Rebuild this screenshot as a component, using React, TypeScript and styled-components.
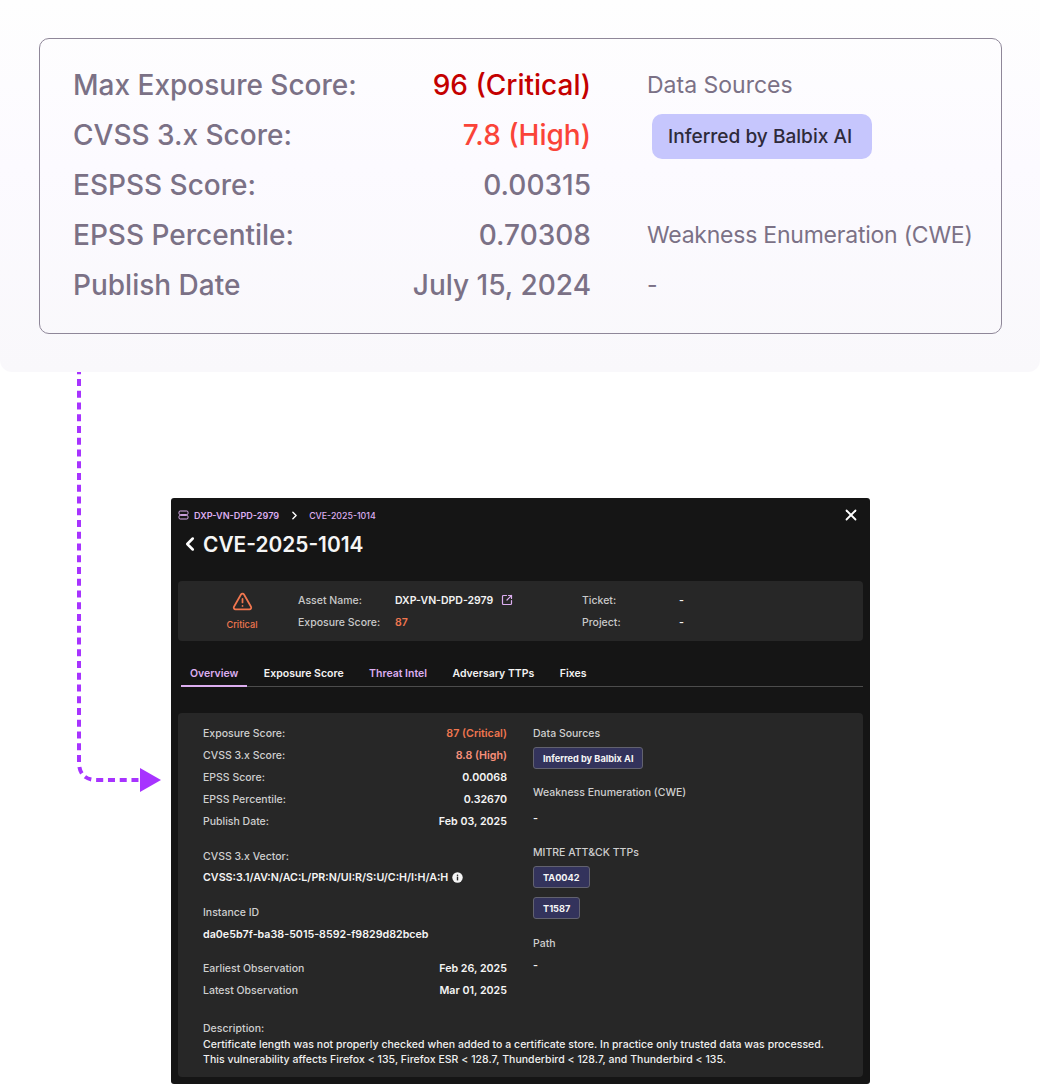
import React from 'react';
import styled, { createGlobalStyle } from 'styled-components';
import { X, ChevronRight, ChevronLeft, TriangleAlert, SquareArrowOutUpRight } from 'lucide-react';

const GlobalStyle = createGlobalStyle`
  html, body {
    margin: 0;
    background: #fff;
    font-family: 'Inter', 'Liberation Sans', sans-serif;
  }
  * { box-sizing: border-box; }
`;

const Page = styled.div`
  width: 1040px;
  height: 1084px;
  overflow: hidden;
`;

const ScorePanel = styled.section`
  height: 372px;
  padding: 38px 38px 0 39px;
  border-radius: 0 0 12px 12px;
  background: linear-gradient(180deg, #fefefe 0%, #fcfaff 45%, #f9f8fb 100%);
`;

const ScoreCard = styled.div`
  height: 296px;
  padding: 21px 28px 0 33px;
  border: 1px solid #8f8799;
  border-radius: 10px;
  display: grid;
  grid-template-columns: 518px 1fr;
  column-gap: 56px;
`;

const ScoreRows = styled.div`
  display: grid;
  grid-auto-rows: 50px;
`;

const ScoreRow = styled.div`
  display: flex;
  justify-content: space-between;
  align-items: center;
  font-size: 28px;
  font-weight: 500;
  color: #7b7186;
`;

const ScoreValue = styled.span<{ $tone?: string }>`
  color: ${({ $tone }) => $tone || '#7b7186'};
`;

const SourceCol = styled.div`
  display: grid;
  grid-auto-rows: 50px;
  align-items: center;
  justify-items: start;
  font-size: 23px;
  color: #7b7186;
  white-space: nowrap;
`;

const TightLabel = styled.span`
  letter-spacing: -0.23px;
`;

const SourceChip = styled.div`
  margin: 2px 0 0 5px;
  height: 45px;
  padding: 0 20px 0 16px;
  display: flex;
  align-items: center;
  border-radius: 10px;
  background: #c6c6fd;
  color: #2e2a3a;
  font-size: 19.1px;
  font-weight: 500;
`;

const LowerSection = styled.section`
  display: flex;
  align-items: flex-start;
`;

const Connector = styled.svg`
  display: block;
  flex: none;
`;

const DetailPanel = styled.div`
  width: 699px;
  height: 586px;
  margin-top: 126px;
  padding: 10px 7px 7px;
  border-radius: 3px;
  background: #151515;
  color: #fff;
`;

const Crumbs = styled.div`
  height: 14px;
  display: flex;
  align-items: center;
`;

const CrumbIcon = styled.svg`
  margin-right: 5px;
`;

const CrumbStrong = styled.span`
  font-size: 9.1px;
  font-weight: 600;
  color: #dcaef0;
`;

const CrumbPlain = styled.span`
  font-size: 8.8px;
  font-weight: 500;
  color: #dcaef0;
`;

const CrumbArrow = styled.span`
  display: flex;
  margin: 0 8px 0 9px;
  color: #fff;
`;

const CloseButton = styled.span`
  margin-left: auto;
  margin-right: 3px;
  display: flex;
  color: #fff;
`;

const TitleRow = styled.div`
  height: 30px;
  margin-top: 7px;
  display: flex;
  align-items: center;
  gap: 2px;
  padding-left: 1px;
`;

const Title = styled.h1`
  margin: 0;
  font-size: 20.9px;
  font-weight: 600;
  color: #f5f5f5;
`;

const Summary = styled.div`
  height: 60px;
  margin-top: 22px;
  display: grid;
  grid-template-columns: 120px 284px 1fr;
  border-radius: 4px;
  background: #272727;
`;

const SeverityCell = styled.div`
  display: flex;
  flex-direction: column;
  align-items: center;
  padding: 10px 0 0 8px;
  gap: 7px;
  font-size: 9.2px;
  font-weight: 500;
  color: #f0764f;
`;

const SummaryGrid = styled.div<{ $label: number }>`
  display: grid;
  grid-template-columns: ${({ $label }) => $label}px 1fr;
  grid-auto-rows: 22px;
  align-content: start;
  align-items: center;
  padding-top: 8px;
  font-size: 10.5px;
`;

const SummaryLabel = styled.span`
  color: #c9c9c9;
  font-weight: 500;
`;

const SummaryValue = styled.span<{ $tone?: string }>`
  display: flex;
  align-items: center;
  gap: 8px;
  font-weight: 600;
  color: ${({ $tone }) => $tone || '#f2f2f2'};
`;

const TabBar = styled.nav`
  height: 27px;
  margin: 19px 0 0 3px;
  padding-left: 9px;
  display: flex;
  gap: 25.5px;
  border-bottom: 1px solid #4c4c4c;
`;

const Tab = styled.div<{ $active?: boolean; $pink?: boolean }>`
  position: relative;
  line-height: 28px;
  font-size: 10.5px;
  font-weight: 600;
  color: ${({ $pink }) => ($pink ? '#dcaef0' : '#f2f2f2')};
  ${({ $active }) =>
    $active &&
    `&::after {
      content: '';
      position: absolute;
      left: -9px;
      right: -9px;
      bottom: -1px;
      height: 2px;
      background: #dcaef0;
    }`}
`;

const ContentBox = styled.div`
  height: 364px;
  margin-top: 26px;
  padding: 9px 25px 0;
  border-radius: 4px;
  background: #272727;
  font-size: 10.5px;
`;

const Columns = styled.div`
  display: grid;
  grid-template-columns: 304px 1fr;
  column-gap: 26px;
`;

const Stack = styled.div`
  display: flex;
  flex-direction: column;
  align-items: stretch;
`;

const Row = styled.div<{ $gap?: number }>`
  min-height: 22px;
  margin-top: ${({ $gap }) => $gap || 0}px;
  display: flex;
  justify-content: space-between;
  align-items: center;
`;

const Label = styled.span`
  color: #cfcfcf;
  font-weight: 500;
`;

const Value = styled.span<{ $tone?: string }>`
  display: inline-flex;
  align-items: center;
  gap: 4px;
  font-size: 10.7px;
  font-weight: 600;
  color: ${({ $tone }) => $tone || '#f5f5f5'};
`;

const Chip = styled.div<{ $gap?: number }>`
  align-self: flex-start;
  height: 22px;
  margin-top: ${({ $gap }) => $gap || 0}px;
  padding: 0 9px;
  display: flex;
  align-items: center;
  border: 1px solid #62626f;
  border-radius: 3px;
  background: #33335c;
  color: #f5f5f5;
  font-size: 9.2px;
  font-weight: 700;
`;

const Description = styled.p`
  margin: 20px 0 0;
  font-size: 10.5px;
  font-weight: 500;
  letter-spacing: 0.035px;
  line-height: 15.5px;
  color: #f0f0f0;
  white-space: nowrap;
`;

const DescriptionLabel = styled.span`
  display: block;
  color: #cfcfcf;
`;

const InfoIcon = () => (
  <svg width="11" height="11" viewBox="0 0 11 11">
    <circle cx="5.5" cy="5.5" r="5.2" fill="#f5f5f5" />
    <circle cx="5.5" cy="3.2" r="0.8" fill="#272727" />
    <rect x="4.8" y="4.6" width="1.4" height="3.8" fill="#272727" />
  </svg>
);

export default function App() {
  return (
    <Page>
      <GlobalStyle />
      <ScorePanel>
        <ScoreCard>
          <ScoreRows>
            <ScoreRow>Max Exposure Score:<ScoreValue $tone="#c40000">96 (Critical)</ScoreValue></ScoreRow>
            <ScoreRow>CVSS 3.x Score:<ScoreValue $tone="#fa4438">7.8 (High)</ScoreValue></ScoreRow>
            <ScoreRow>ESPSS Score:<ScoreValue>0.00315</ScoreValue></ScoreRow>
            <ScoreRow>EPSS Percentile:<ScoreValue>0.70308</ScoreValue></ScoreRow>
            <ScoreRow>Publish Date<ScoreValue>July 15, 2024</ScoreValue></ScoreRow>
          </ScoreRows>
          <SourceCol>
            <span>Data Sources</span>
            <SourceChip>Inferred by Balbix AI</SourceChip>
            <span />
            <TightLabel>Weakness Enumeration (CWE)</TightLabel>
            <span>-</span>
          </SourceCol>
        </ScoreCard>
      </ScorePanel>

      <LowerSection>
        <Connector width="171" height="420" viewBox="0 0 171 420">
          <path
            d="M79 0 V390 Q79 408 97 408 H141"
            fill="none"
            stroke="#a733ff"
            strokeWidth="4"
            strokeDasharray="7 4.75"
            strokeDashoffset="4.75"
          />
          <path d="M140 396 L161 408 L140 420 Z" fill="#a733ff" />
        </Connector>

        <DetailPanel>
          <Crumbs>
            <CrumbIcon width="11" height="10" viewBox="0 0 11 10" fill="none" stroke="#dcaef0" strokeWidth="1">
              <rect x="1" y="1" width="9" height="3.6" rx="1.2" />
              <rect x="1" y="5.4" width="9" height="3.6" rx="1.2" />
            </CrumbIcon>
            <CrumbStrong>DXP-VN-DPD-2979</CrumbStrong>
            <CrumbArrow><ChevronRight size={13} strokeWidth={2.6} /></CrumbArrow>
            <CrumbPlain>CVE-2025-1014</CrumbPlain>
            <CloseButton><X size={18} strokeWidth={2.4} /></CloseButton>
          </Crumbs>
          <TitleRow>
            <ChevronLeft size={22} strokeWidth={2.8} />
            <Title>CVE-2025-1014</Title>
          </TitleRow>

          <Summary>
            <SeverityCell>
              <TriangleAlert size={21} strokeWidth={2} />
              Critical
            </SeverityCell>
            <SummaryGrid $label={97}>
              <SummaryLabel>Asset Name:</SummaryLabel>
              <SummaryValue>
                DXP-VN-DPD-2979
                <SquareArrowOutUpRight size={12} color="#dcaef0" strokeWidth={2.4} />
              </SummaryValue>
              <SummaryLabel>Exposure Score:</SummaryLabel>
              <SummaryValue $tone="#f0764f">87</SummaryValue>
            </SummaryGrid>
            <SummaryGrid $label={97}>
              <SummaryLabel>Ticket:</SummaryLabel>
              <SummaryValue>-</SummaryValue>
              <SummaryLabel>Project:</SummaryLabel>
              <SummaryValue>-</SummaryValue>
            </SummaryGrid>
          </Summary>

          <TabBar>
            <Tab $active $pink>Overview</Tab>
            <Tab>Exposure Score</Tab>
            <Tab $pink>Threat Intel</Tab>
            <Tab>Adversary TTPs</Tab>
            <Tab>Fixes</Tab>
          </TabBar>

          <ContentBox>
            <Columns>
              <Stack>
                <Row><Label>Exposure Score:</Label><Value $tone="#f0764f">87 (Critical)</Value></Row>
                <Row><Label>CVSS 3.x Score:</Label><Value $tone="#f8907a">8.8 (High)</Value></Row>
                <Row><Label>EPSS Score:</Label><Value>0.00068</Value></Row>
                <Row><Label>EPSS Percentile:</Label><Value>0.32670</Value></Row>
                <Row><Label>Publish Date:</Label><Value>Feb 03, 2025</Value></Row>
                <Row $gap={13}><Label>CVSS 3.x Vector:</Label></Row>
                <Row $gap={-1}><Value>CVSS:3.1/AV:N/AC:L/PR:N/UI:R/S:U/C:H/I:H/A:H <InfoIcon /></Value></Row>
                <Row $gap={13}><Label>Instance ID</Label></Row>
                <Row><Value>da0e5b7f-ba38-5015-8592-f9829d82bceb</Value></Row>
                <Row $gap={12}><Label>Earliest Observation</Label><Value>Feb 26, 2025</Value></Row>
                <Row><Label>Latest Observation</Label><Value>Mar 01, 2025</Value></Row>
              </Stack>
              <Stack>
                <Row><Label>Data Sources</Label></Row>
                <Chip $gap={3}>Inferred by Balbix AI</Chip>
                <Row $gap={12}><Label>Weakness Enumeration (CWE)</Label></Row>
                <Row $gap={4}><Value>-</Value></Row>
                <Row $gap={12}><Label>MITRE ATT&amp;CK TTPs</Label></Row>
                <Chip $gap={3}>TA0042</Chip>
                <Chip $gap={9}>T1587</Chip>
                <Row $gap={13}><Label>Path</Label></Row>
                <Row><Value>-</Value></Row>
              </Stack>
            </Columns>
            <Description>
              <DescriptionLabel>Description:</DescriptionLabel>
              Certificate length was not properly checked when added to a certificate store. In practice only trusted data was processed.
              <br />
              This vulnerability affects Firefox &lt; 135, Firefox ESR &lt; 128.7, Thunderbird &lt; 128.7, and Thunderbird &lt; 135.
            </Description>
          </ContentBox>
        </DetailPanel>
      </LowerSection>
    </Page>
  );
}
